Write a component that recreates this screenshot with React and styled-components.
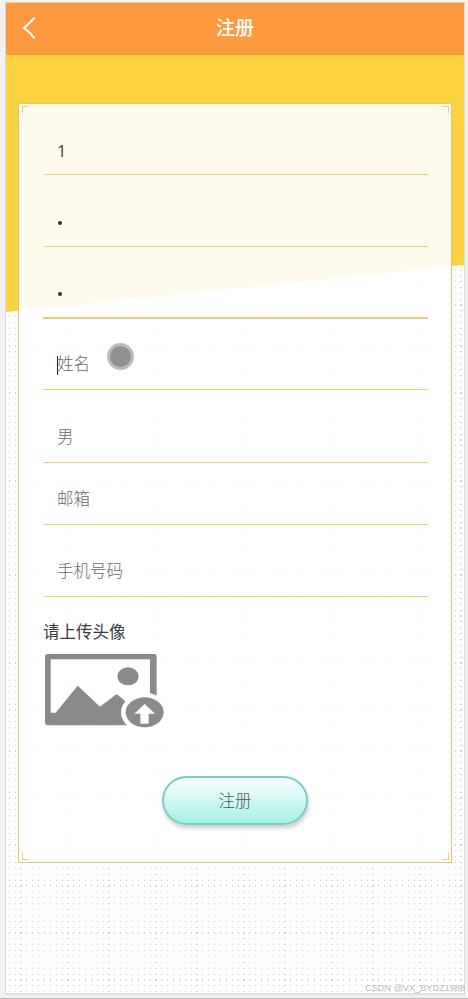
import React from 'react'
import styled, { createGlobalStyle } from 'styled-components'

const GlobalStyle = createGlobalStyle`
  * {
    box-sizing: border-box;
  }

  body {
    margin: 0;
    background: #f1f1f2;
    font-family: "Liberation Sans", "Noto Sans CJK SC", sans-serif;
  }
`

// dots are [offset, size] inside one tile
const columnDots = [
  [0, 1], [6, 1], [11, 2], [17, 1], [23, 1], [29, 1], [35, 1], [41, 1],
  [47, 1], [53, 1], [58, 2], [64, 1], [70, 1], [76, 1], [82, 1]
]
const rowDots = [
  [0, 2], [6, 1], [12, 1], [18, 1], [24, 1], [30, 1], [36, 1], [41, 2],
  [47, 1], [53, 1], [59, 1], [65, 1], [71, 1], [77, 1], [83, 1], [88, 2],
  [94, 1], [100, 1], [106, 1], [112, 1], [118, 1], [124, 1], [130, 1]
]

const stripes = (dots, color) => dots
  .map(([start, size]) => `transparent ${start}px, ${color} ${start}px ${start + size}px, transparent ${start + size}px`)
  .join(', ')

const Page = styled.div`
  height: 999px;
  padding: 2px 3px 0 5px;
  border-bottom: 1px solid #bdbdbd;
  overflow: hidden;
`

const Phone = styled.div`
  position: relative;
  width: 460px;
  height: 993px;
  border: 1px solid #dadada;
  border-top-color: #d3cfca;
  border-bottom: 2px solid #dfdfdf;
  background: #fff;
`

const Dots = styled.div`
  position: absolute;
  inset: 0;
  background: linear-gradient(to right, ${stripes(columnDots, '#d2d2d2')}) 3px 0 / 88px 100%;
  mask: linear-gradient(to bottom, ${stripes(rowDots, '#000')}) 0 31px / 100% 135px;
`

const Slope = styled.div`
  position: absolute;
  top: 52px;
  left: 0;
  right: 0;
  height: 257px;
  background: #fbd23f;
  clip-path: polygon(0 0, 100% 0, 100% 210px, 0 100%);
`

const Header = styled.header`
  position: relative;
  display: grid;
  grid-template-columns: 46px 1fr 46px;
  align-items: center;
  height: 52px;
  background: #fd993f;
  color: #fff;
`

const BackIcon = styled.svg`
  width: 14px;
  height: 22px;
  margin: -3px 0 0 16px;
`

const Title = styled.h1`
  margin: 0;
  font-size: 19px;
  line-height: 28px;
  font-weight: 500;
  text-align: center;
`

const Card = styled.form`
  position: relative;
  width: 434px;
  height: 760px;
  margin: 48px 0 0 12px;
  padding: 0 23px 0 24px;
  border: 1px solid #dfc47c;
  background: rgba(255, 255, 255, 0.9);
`

const Corner = styled.i`
  position: absolute;
  width: 7px;
  height: 7px;
  border: 0 solid #ead275;
  ${p => p.$y}: 2px;
  ${p => p.$x}: ${p => (p.$x === 'left' ? 3 : 2)}px;
  border-${p => p.$y}-width: 1px;
  border-${p => p.$x}-width: 1px;
`

const Field = styled.div`
  display: flex;
  align-items: flex-end;
  height: ${p => p.$height}px;
  padding: 0 14px ${p => (p.$filled ? 11 : 13)}px;
  border-bottom: ${p => p.$line || 1}px solid ${p => (p.$line ? '#e6cf78' : '#edd370')};
  color: ${p => (p.$filled ? '#4a3c34' : '#686868')};
  font-family: ${p => (p.$filled ? '"Open Sans", sans-serif' : 'inherit')};
  font-size: 16.5px;
  line-height: 24px;
  font-weight: ${p => (p.$filled ? 400 : 300)};
`

const Bullet = styled.span`
  width: 4px;
  height: 4px;
  margin: 0 0 8px 1px;
  border-radius: 50%;
  background: #2b3238;
`

const Caret = styled.span`
  width: 1px;
  height: 19px;
  margin: 0 -1px 1px 0;
  background: #222;
`

const Touch = styled.span`
  position: absolute;
  top: 239px;
  left: 88px;
  width: 27px;
  height: 27px;
  border: 3px solid #bcbcbc;
  border-radius: 50%;
  background: #919191;
`

const Label = styled.div`
  margin-top: 23px;
  color: #3c3c3c;
  font-size: 16.5px;
  line-height: 24px;
`

const UploadIcon = styled.svg`
  display: block;
  width: 122px;
  height: 78px;
  margin-top: 8px;
`

const Submit = styled.button`
  display: block;
  width: 146px;
  height: 49px;
  margin: 46px 0 0 119px;
  padding: 0 0 1px;
  border: 2px solid #78cdc4;
  border-radius: 25px;
  background: linear-gradient(#fafffe, #a5f1ea);
  box-shadow: 1px 3px 4px rgba(0, 0, 0, 0.2);
  color: #555;
  font-family: inherit;
  font-size: 16.5px;
  font-weight: 300;
`

const Watermark = styled.div`
  position: absolute;
  right: -1px;
  bottom: -1px;
  color: #b8b8b8;
  font-size: 9px;
  line-height: 12px;
  letter-spacing: 0.1px;
  white-space: nowrap;
`

const App = () => (
  <Page>
    <GlobalStyle/>
    <Phone>
      <Dots/>
      <Slope/>
      <Header>
        <BackIcon viewBox="0 0 14 22" fill="none" stroke="#fff" strokeWidth="2">
          <path d="M13 1.500h-1.500L8.500 5 2 11l6.500 5.500 3 4H13"/>
        </BackIcon>
        <Title>注册</Title>
      </Header>
      <Card>
        <Corner $y="top" $x="left"/>
        <Corner $y="top" $x="right"/>
        <Corner $y="bottom" $x="left"/>
        <Corner $y="bottom" $x="right"/>
        <Field $height={71} $filled>1</Field>
        <Field $height={72}><Bullet/></Field>
        <Field $height={72} $line={2}><Bullet/></Field>
        <Field $height={71}><Caret/>姓名</Field>
        <Field $height={73}>男</Field>
        <Field $height={62}>邮箱</Field>
        <Field $height={72}>手机号码</Field>
        <Label>请上传头像</Label>
        <UploadIcon viewBox="69 336 366 234" fill="#8a8a8a">
          <path fillRule="evenodd" d="M83 342H402Q410 342 410 352V556H83Q75 556 75 547V352Q75 342 83 342ZM92 358V518H107L173 437 240 500 290 462 330 495 390 480V358Z"/>
          <ellipse cx="324" cy="409" rx="32" ry="27"/>
          <ellipse cx="374" cy="517" rx="71" ry="59" fill="#fff"/>
          <ellipse cx="374" cy="517" rx="57" ry="45"/>
          <path d="M374 492 343 521H361V551H386V521H405Z" fill="#fff"/>
        </UploadIcon>
        <Submit type="button">注册</Submit>
        <Touch/>
      </Card>
      <Watermark>CSDN @VX_BYDZ1988</Watermark>
    </Phone>
  </Page>
)

export default App
